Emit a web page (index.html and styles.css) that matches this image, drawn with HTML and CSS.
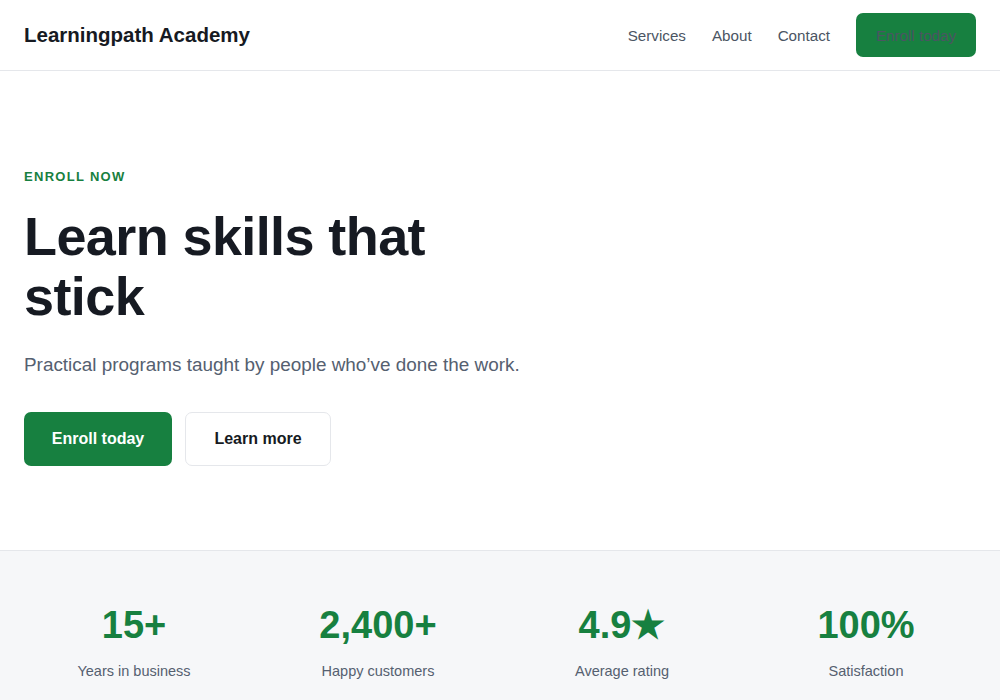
FILE: index.html
```html
<!DOCTYPE html>
<html lang="en">
<head>
<meta charset="utf-8">
<title>Learningpath Academy</title>
<link rel="stylesheet" href="styles.css">
</head>
<body>
<header class="site-header">
  <div class="brand">Learningpath Academy</div>
  <nav class="nav">
    <a class="nav-link" href="#">Services</a>
    <a class="nav-link" href="#">About</a>
    <a class="nav-link" href="#">Contact</a>
    <a class="nav-cta" href="#">Enroll today</a>
  </nav>
</header>
<main>
  <section class="hero">
    <p class="eyebrow">ENROLL NOW</p>
    <h1 class="hero-title">Learn skills that stick</h1>
    <p class="hero-sub">Practical programs taught by people who’ve done the work.</p>
    <div class="hero-actions">
      <a class="btn btn-primary" href="#">Enroll today</a>
      <a class="btn btn-secondary" href="#">Learn more</a>
    </div>
  </section>
  <section class="stats">
    <div class="stat"><div class="stat-value">15+</div><div class="stat-label">Years in business</div></div>
    <div class="stat"><div class="stat-value">2,400+</div><div class="stat-label">Happy customers</div></div>
    <div class="stat"><div class="stat-value">4.9★</div><div class="stat-label">Average rating</div></div>
    <div class="stat"><div class="stat-value">100%</div><div class="stat-label">Satisfaction</div></div>
  </section>
</main>
</body>
</html>
```
FILE: styles.css
```css
* { box-sizing: border-box; }
html, body { margin: 0; padding: 0; }
body {
  font-family: "Liberation Sans", Arial, sans-serif;
  color: #161a22;
  background: #ffffff;
}
a { text-decoration: none; }

.site-header {
  height: 71px;
  display: flex;
  align-items: center;
  justify-content: space-between;
  padding: 0 24px;
  border-bottom: 1px solid #e5e7eb;
}
.brand {
  font-size: 20.5px;
  font-weight: 700;
  color: #161a22;
}
.nav {
  display: flex;
  align-items: center;
  gap: 26px;
}
.nav-link {
  font-size: 15.2px;
  color: #4b5563;
}
.nav-cta {
  display: flex;
  align-items: center;
  justify-content: center;
  width: 120px;
  height: 44px;
  background: #178040;
  color: #4b5563;
  font-size: 15.2px;
  border-radius: 7px;
}

.hero {
  padding: 98px 24px 84px;
}
.eyebrow {
  margin: 0;
  font-size: 13px;
  font-weight: 700;
  letter-spacing: 1.3px;
  color: #178040;
  line-height: 16px;
}
.hero-title {
  margin: 21px 0 0;
  max-width: 520px;
  font-size: 54px;
  line-height: 60px;
  font-weight: 700;
  letter-spacing: -0.6px;
  color: #161a22;
}
.hero-sub {
  margin: 25px 0 0;
  font-size: 18.9px;
  line-height: 28px;
  color: #556070;
}
.hero-actions {
  display: flex;
  gap: 13px;
  margin-top: 33px;
}
.btn {
  display: flex;
  align-items: center;
  justify-content: center;
  height: 54px;
  border-radius: 7px;
  font-size: 16px;
  font-weight: 700;
}
.btn-primary {
  width: 148px;
  background: #178040;
  color: #ffffff;
}
.btn-secondary {
  width: 146px;
  background: #ffffff;
  color: #161a22;
  border: 1px solid #e5e7eb;
}

.stats {
  display: grid;
  grid-template-columns: repeat(4, 1fr);
  gap: 24px;
  padding: 51px 24px 40px;
  background: #f6f7f9;
  border-top: 1px solid #e5e7eb;
  text-align: center;
}
.stat-value {
  font-size: 38px;
  line-height: 46px;
  font-weight: 700;
  color: #178040;
}
.stat-label {
  margin-top: 13px;
  font-size: 14.5px;
  line-height: 20px;
  color: #556070;
}
```
